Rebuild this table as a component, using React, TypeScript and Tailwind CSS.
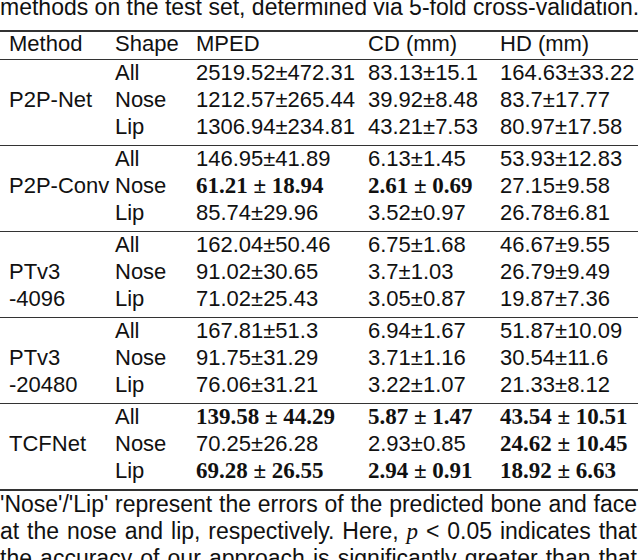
type Cell = { t: string; b?: boolean };

const n = (t: string): Cell => ({ t });
const B = (t: string): Cell => ({ t, b: true });

const groups: { method: string[]; rows: [string, Cell, Cell, Cell][] }[] = [
  {
    method: ["", "P2P-Net", ""],
    rows: [
      ["All", n("2519.52±472.31"), n("83.13±15.1"), n("164.63±33.22")],
      ["Nose", n("1212.57±265.44"), n("39.92±8.48"), n("83.7±17.77")],
      ["Lip", n("1306.94±234.81"), n("43.21±7.53"), n("80.97±17.58")],
    ],
  },
  {
    method: ["", "P2P-Conv", ""],
    rows: [
      ["All", n("146.95±41.89"), n("6.13±1.45"), n("53.93±12.83")],
      ["Nose", B("61.21 ± 18.94"), B("2.61 ± 0.69"), n("27.15±9.58")],
      ["Lip", n("85.74±29.96"), n("3.52±0.97"), n("26.78±6.81")],
    ],
  },
  {
    method: ["", "PTv3", "-4096"],
    rows: [
      ["All", n("162.04±50.46"), n("6.75±1.68"), n("46.67±9.55")],
      ["Nose", n("91.02±30.65"), n("3.7±1.03"), n("26.79±9.49")],
      ["Lip", n("71.02±25.43"), n("3.05±0.87"), n("19.87±7.36")],
    ],
  },
  {
    method: ["", "PTv3", "-20480"],
    rows: [
      ["All", n("167.81±51.3"), n("6.94±1.67"), n("51.87±10.09")],
      ["Nose", n("91.75±31.29"), n("3.71±1.16"), n("30.54±11.6")],
      ["Lip", n("76.06±31.21"), n("3.22±1.07"), n("21.33±8.12")],
    ],
  },
  {
    method: ["", "TCFNet", ""],
    rows: [
      ["All", B("139.58 ± 44.29"), B("5.87 ± 1.47"), B("43.54 ± 10.51")],
      ["Nose", n("70.25±26.28"), n("2.93±0.85"), B("24.62 ± 10.45")],
      ["Lip", B("69.28 ± 26.55"), B("2.94 ± 0.91"), B("18.92 ± 6.63")],
    ],
  },
];

const cols = "grid grid-cols-[106px_81px_172px_132px_1fr] pl-[9px] items-baseline";

function Value({ c }: { c: Cell }) {
  if (c.b)
    return (
      <span className="font-['Liberation_Serif',serif] text-[23px] font-bold">
        {c.t}
      </span>
    );
  return <span>{c.t}</span>;
}

export default function App() {
  return (
    <div className="w-[640px] h-[560px] overflow-hidden bg-white text-[#111] font-['Liberation_Sans',Arial,sans-serif] text-[22px]">
      <div className="h-[30px] text-[23px] leading-[14px] whitespace-nowrap text-justify [text-align-last:justify] pr-[3px]">
        methods on the test set, determined via 5-fold cross-validation.
      </div>

      <div className="w-[638px] border-t-2 border-[#333]">
        <div className={`${cols} h-[28px] leading-[23px] border-b border-[#333]`}>
          <div>Method</div>
          <div>Shape</div>
          <div>MPED</div>
          <div>CD (mm)</div>
          <div>HD (mm)</div>
        </div>

        {groups.map((g, gi) => (
          <div
            key={gi}
            className={`pb-[4px] ${gi < groups.length - 1 ? "border-b border-[#333]" : "border-b-2 border-[#333]"}`}
          >
            {g.rows.map((r, ri) => (
              <div key={ri} className={`${cols} h-[27px] leading-[25px] whitespace-nowrap`}>
                <div>{g.method[ri]}</div>
                <div>{r[0]}</div>
                <div>
                  <Value c={r[1]} />
                </div>
                <div>
                  <Value c={r[2]} />
                </div>
                <div>
                  <Value c={r[3]} />
                </div>
              </div>
            ))}
          </div>
        ))}
      </div>

      <div className="text-[23px] leading-[27px] pr-[3px] whitespace-nowrap">
        <div className="text-justify [text-align-last:justify]">
          'Nose'/'Lip' represent the errors of the predicted bone and face
        </div>
        <div className="text-justify [text-align-last:justify]">
          at the nose and lip, respectively. Here,{" "}
          <i className="font-['Liberation_Serif',serif]">p</i> &lt; 0.05 indicates that
        </div>
        <div className="text-justify [text-align-last:justify]">
          the accuracy of our approach is significantly greater than that
        </div>
      </div>
    </div>
  );
}
